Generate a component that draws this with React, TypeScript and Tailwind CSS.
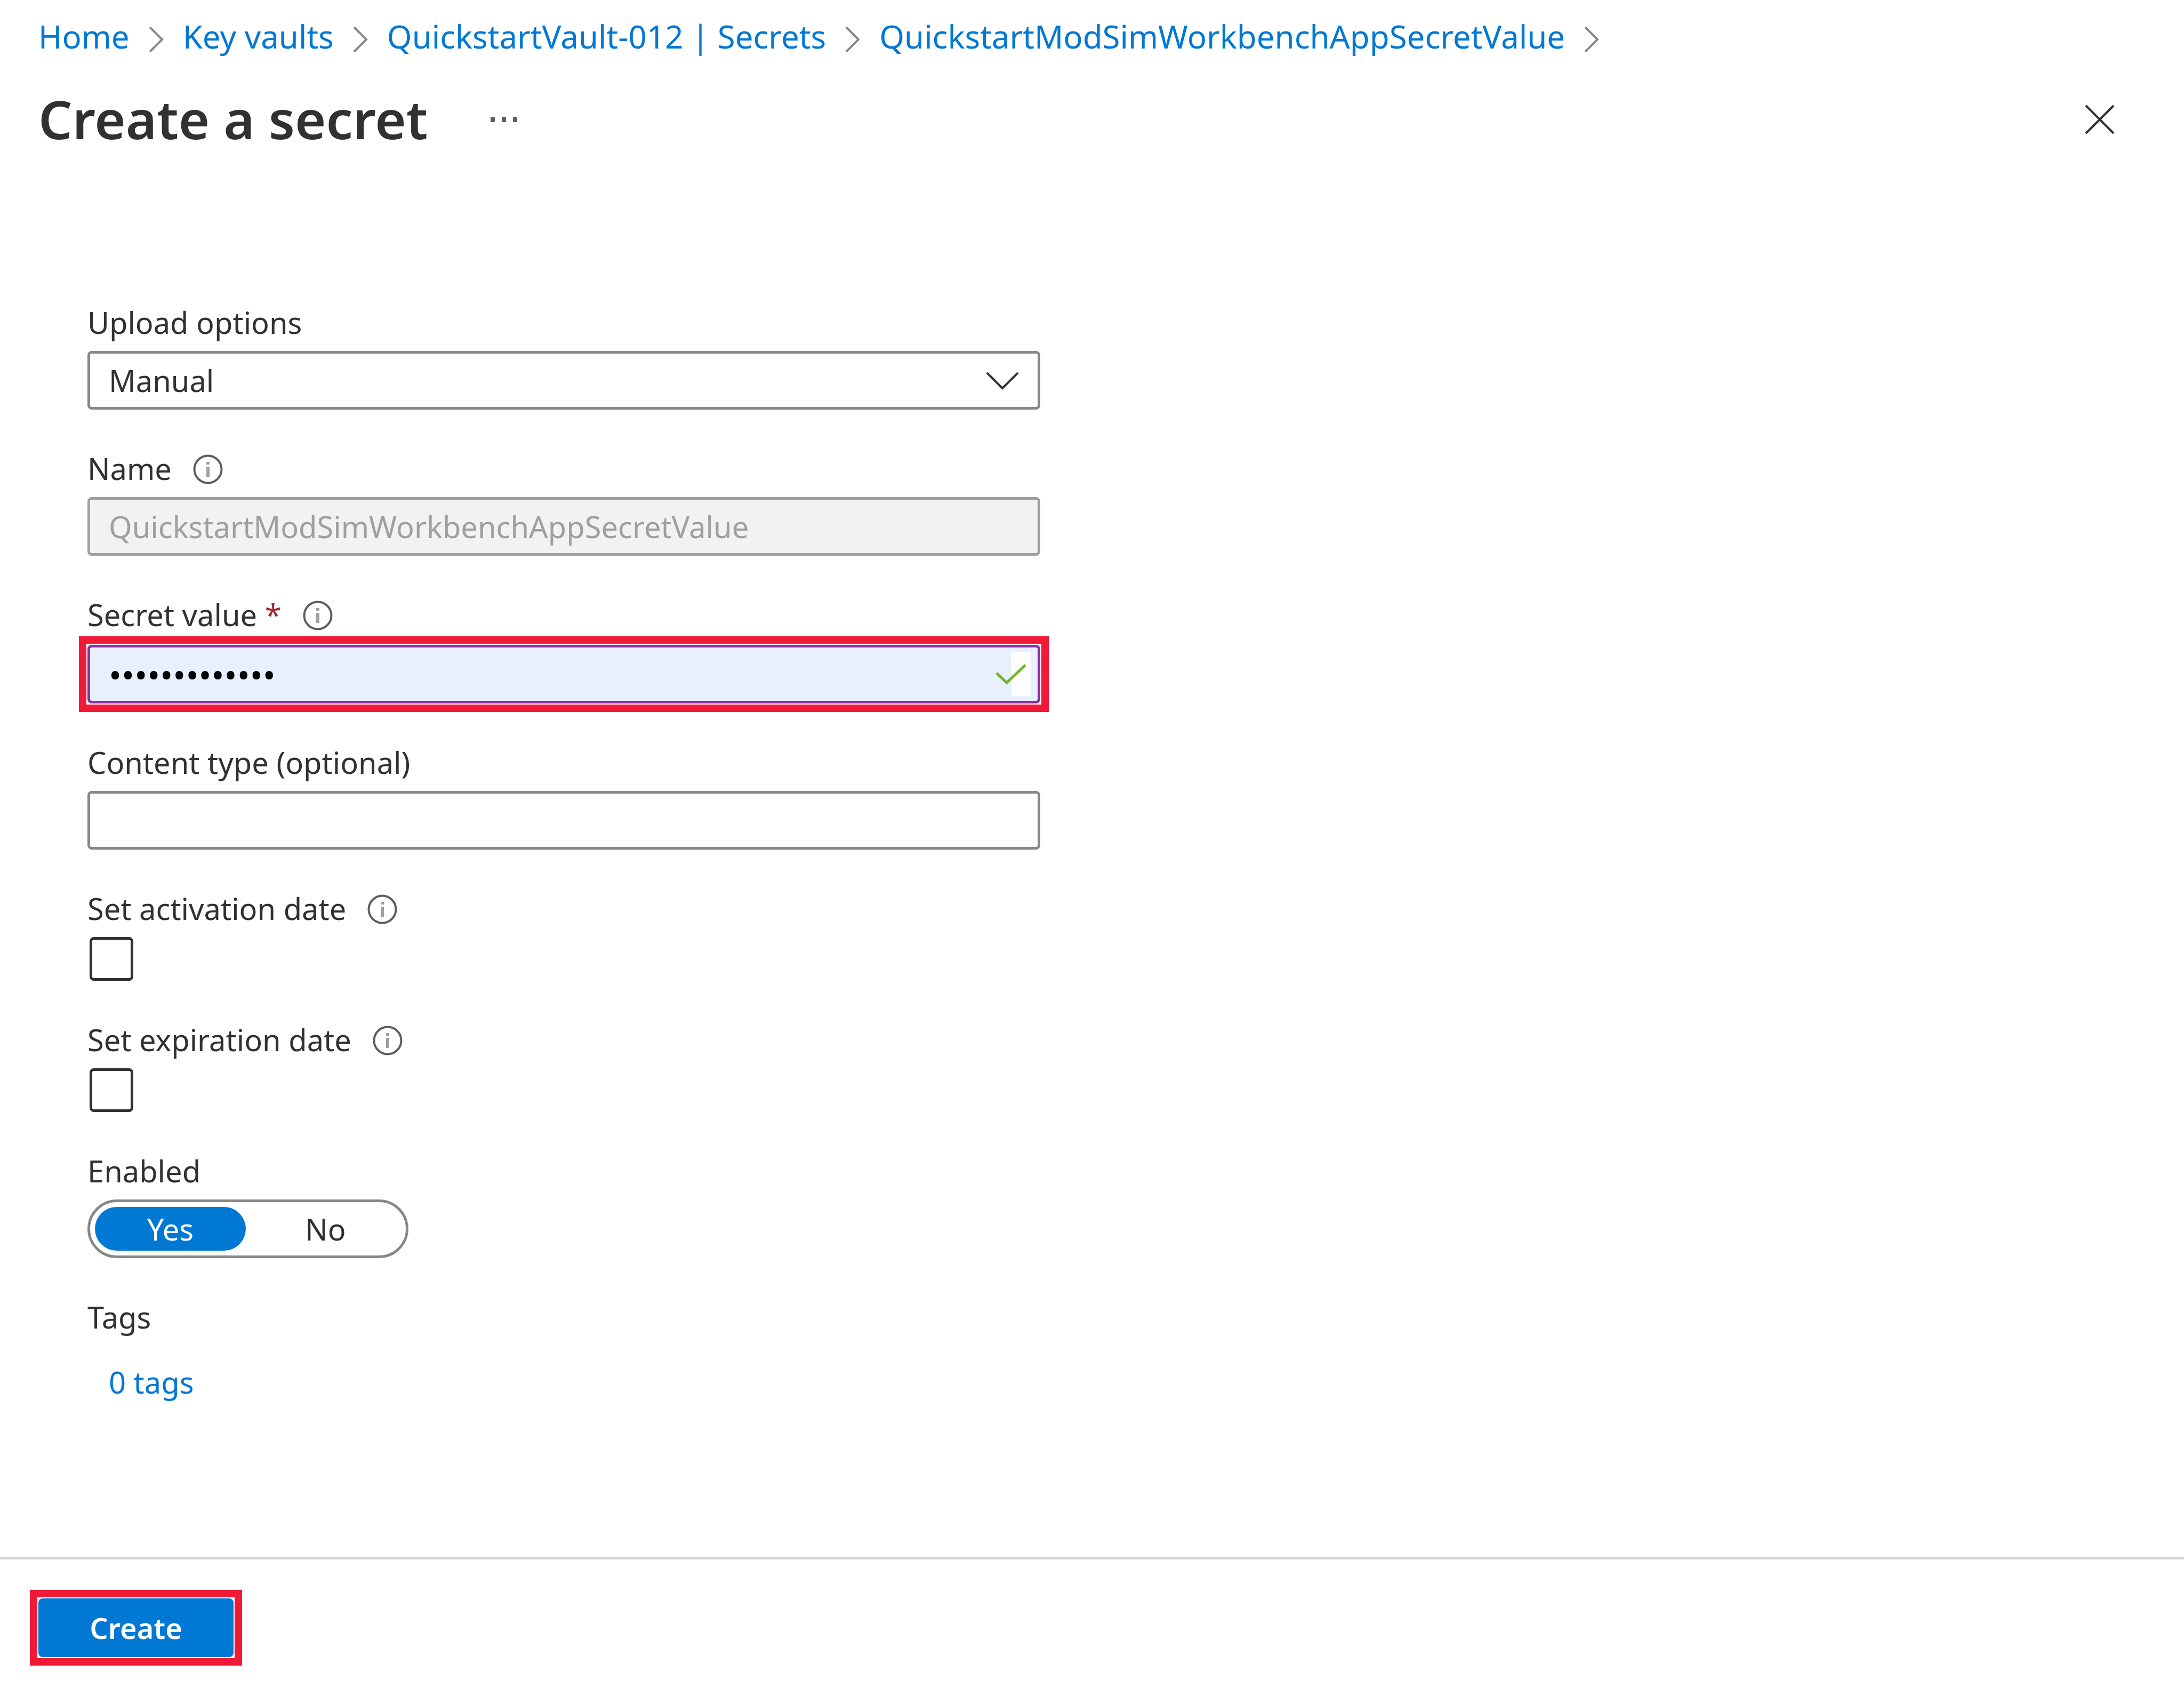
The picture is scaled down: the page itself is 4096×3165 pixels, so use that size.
import type { ReactNode } from "react";

const crumbs = [
  "Home",
  "Key vaults",
  "QuickstartVault-012 | Secrets",
  "QuickstartModSimWorkbenchAppSecretValue",
];

function CrumbChevron() {
  return (
    <svg viewBox="0 0 28 48" className="mt-3 h-12 w-7 shrink-0" fill="none" stroke="#8a8886" strokeWidth="4" aria-hidden="true">
      <path d="M2 1 L25 24 L2 47" />
    </svg>
  );
}

function InfoIcon() {
  return (
    <svg viewBox="0 0 56 56" className="mt-1 size-14 shrink-0" fill="none" role="img" aria-label="More information">
      <circle cx="28" cy="28" r="25.5" stroke="#605e5c" strokeWidth="4" />
      <path d="M28 14 V19 M28 23 V42" stroke="#a19f9d" strokeWidth="6" />
    </svg>
  );
}

function FieldLabel({
  htmlFor,
  required,
  info,
  children,
}: {
  htmlFor: string;
  required?: boolean;
  info?: boolean;
  children: ReactNode;
}) {
  return (
    <div className="mb-[26px] flex h-14 items-center gap-10 leading-14">
      <label htmlFor={htmlFor} className="whitespace-nowrap">
        {children}
        {required && <span className="text-[#a4262c]"> *</span>}
      </label>
      {info && <InfoIcon />}
    </div>
  );
}

const boxClass = "block h-[110px] w-full rounded-lg border-[5px] bg-white px-[35px] outline-none";
const checkClass =
  "ml-1 block size-[82px] appearance-none rounded-lg border-[5px] border-[#323130] bg-white checked:bg-[#0078d4]";
const pillClass =
  "flex h-[82px] w-[283px] cursor-pointer items-center justify-center rounded-full has-checked:bg-[#0078d4] has-checked:text-white";

export default function App() {
  return (
    <div className="flex min-h-screen flex-col bg-white font-['Noto_Sans',sans-serif] text-[56px] leading-[80px] text-[#323130]">
      <header className="px-[72px] pt-7">
        <nav aria-label="Breadcrumb">
          <ol className="flex items-center gap-9 text-[60px] text-[#0078d4]">
            {crumbs.map((crumb) => (
              <li key={crumb} className="flex items-center gap-9 whitespace-nowrap">
                <a href="#">{crumb}</a>
                <CrumbChevron />
              </li>
            ))}
          </ol>
        </nav>
        <div className="mt-12 flex items-center">
          <h1 className="pb-1 text-[100px] leading-[132px] font-semibold">Create a secret</h1>
          <button type="button" aria-label="More actions" className="ml-[116px]">
            <svg viewBox="0 0 56 12" className="h-3 w-14" fill="#605e5c" aria-hidden="true">
              <rect x="2" y="1" width="8" height="10" rx="2" />
              <rect x="23" y="1" width="8" height="10" rx="2" />
              <rect x="44" y="1" width="8" height="10" rx="2" />
            </svg>
          </button>
          <button type="button" aria-label="Close" className="mr-[58px] ml-auto">
            <svg viewBox="0 0 56 56" className="size-14" fill="none" stroke="#323130" strokeWidth="4" aria-hidden="true">
              <path d="M2 2 L54 54 M54 2 L2 54" />
            </svg>
          </button>
        </div>
      </header>

      <main className="flex-1 px-[164px] pt-[284px]">
        <form id="secret-form" className="flex w-full max-w-[1787px] flex-col gap-[82px]">
          <div>
            <FieldLabel htmlFor="upload">Upload options</FieldLabel>
            <div className="relative">
              <select id="upload" className={`${boxClass} appearance-none border-[#8a8886]`}>
                <option>Manual</option>
              </select>
              <svg
                viewBox="0 0 62 36"
                className="pointer-events-none absolute top-[38px] right-10 h-9 w-[62px]"
                fill="none"
                stroke="#323130"
                strokeWidth="4"
                aria-hidden="true"
              >
                <path d="M2 3 L31 32 L60 3" />
              </svg>
            </div>
          </div>

          <div>
            <FieldLabel htmlFor="name" info>
              Name
            </FieldLabel>
            <input
              id="name"
              type="text"
              disabled
              defaultValue="QuickstartModSimWorkbenchAppSecretValue"
              className={`${boxClass} border-[#a19f9d] disabled:bg-[#f3f2f1] disabled:text-[#a19f9d]`}
            />
          </div>

          <div>
            <FieldLabel htmlFor="value" required info>
              Secret value
            </FieldLabel>
            <div className="relative mt-[29px] outline-[14px] outline-offset-2 outline-[#f01a37] outline-solid">
              <input
                id="value"
                type="password"
                required
                defaultValue="abcdefghijklm"
                className="block h-[110px] w-full rounded-lg border-[5px] border-[#8a2da5] bg-[#e8f0fe] px-[35px] text-[64px] text-black outline-none"
              />
              <span className="pointer-events-none absolute top-[14px] right-[18px] h-[82px] w-[37px] bg-white" />
              <svg
                viewBox="0 0 58 40"
                className="pointer-events-none absolute top-[35px] right-[26px] h-10 w-[58px]"
                fill="none"
                stroke="#73b42d"
                strokeWidth="5"
                aria-hidden="true"
              >
                <path d="M2 18 L21 36 L56 3" />
              </svg>
            </div>
          </div>

          <div>
            <FieldLabel htmlFor="content">Content type (optional)</FieldLabel>
            <input id="content" type="text" className={`${boxClass} border-[#8a8886]`} />
          </div>

          <div>
            <FieldLabel htmlFor="activation" info>
              Set activation date
            </FieldLabel>
            <input id="activation" type="checkbox" className={checkClass} />
          </div>

          <div>
            <FieldLabel htmlFor="expiration" info>
              Set expiration date
            </FieldLabel>
            <input id="expiration" type="checkbox" className={checkClass} />
          </div>

          <fieldset>
            <legend className="mb-[26px] h-14 leading-14">Enabled</legend>
            <div className="flex h-[110px] w-[602px] items-center justify-between rounded-full border-[5px] border-[#8a8886] px-[9px]">
              <label className={pillClass}>
                <input type="radio" name="enabled" defaultChecked className="sr-only" />
                Yes
              </label>
              <label className={pillClass}>
                <input type="radio" name="enabled" className="sr-only" />
                No
              </label>
            </div>
          </fieldset>

          <div>
            <h2 className="h-14 leading-14">Tags</h2>
            <a href="#" className="mt-[54px] ml-10 inline-block text-[#0078d4]">
              0 tags
            </a>
          </div>
        </form>
      </main>

      <footer className="border-t-[5px] border-[#d6d6d6] px-[72px] pt-[73px] pb-[58px]">
        <div className="w-fit outline-[14px] outline-offset-2 outline-[#f01a37] outline-solid">
          <button
            type="submit"
            form="secret-form"
            className="block h-[110px] w-[366px] rounded-lg bg-[#0078d4] text-[54px] font-semibold text-white"
          >
            Create
          </button>
        </div>
      </footer>
    </div>
  );
}
